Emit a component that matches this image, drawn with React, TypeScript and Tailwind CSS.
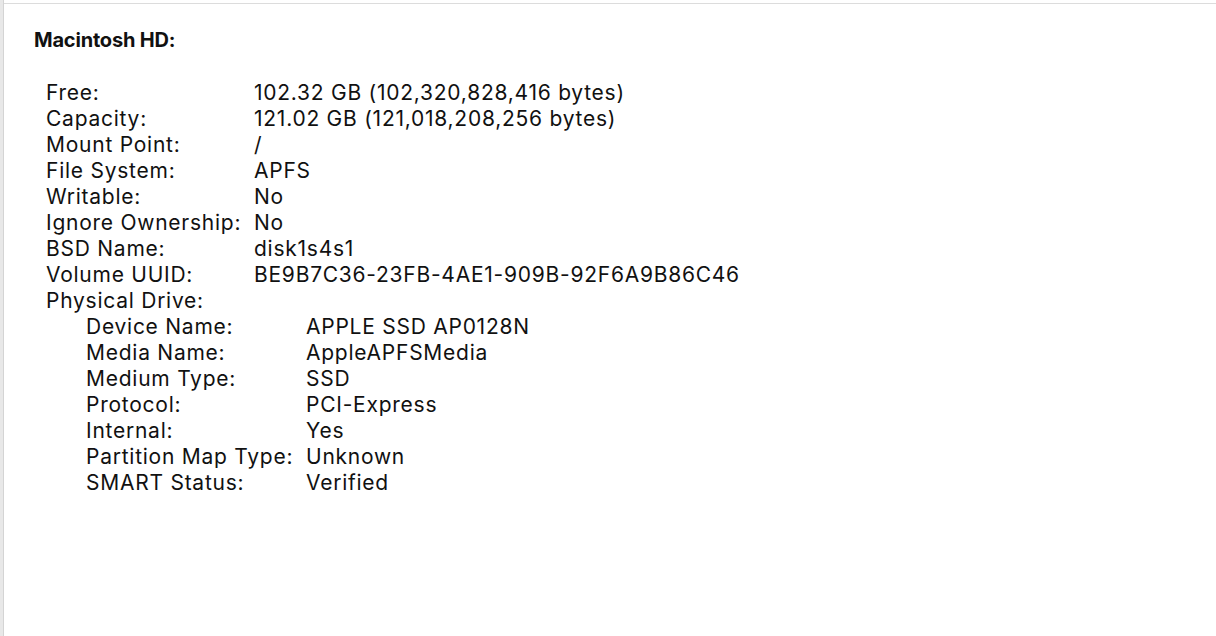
import React from 'react';

const volumeRows: [string, string][] = [
  ['Free:', '102.32 GB (102,320,828,416 bytes)'],
  ['Capacity:', '121.02 GB (121,018,208,256 bytes)'],
  ['Mount Point:', '/'],
  ['File System:', 'APFS'],
  ['Writable:', 'No'],
  ['Ignore Ownership:', 'No'],
  ['BSD Name:', 'disk1s4s1'],
  ['Volume UUID:', 'BE9B7C36-23FB-4AE1-909B-92F6A9B86C46'],
];

const driveRows: [string, string][] = [
  ['Device Name:', 'APPLE SSD AP0128N'],
  ['Media Name:', 'AppleAPFSMedia'],
  ['Medium Type:', 'SSD'],
  ['Protocol:', 'PCI-Express'],
  ['Internal:', 'Yes'],
  ['Partition Map Type:', 'Unknown'],
  ['SMART Status:', 'Verified'],
];

export default function App() {
  return (
    <div className="flex h-[636px] w-[1216px] overflow-hidden bg-white font-['Inter',sans-serif] text-[#111]">
      {/* left sidebar edge */}
      <div className="w-[4px] shrink-0 border-r border-[#d4d4d4] bg-[#e8e8e8]" />
      <div className="flex min-w-0 flex-1 flex-col pt-[3px]">
        <div className="h-[1px] bg-[#dcdcdc]" />
        <div className="pl-[30px] pt-[23px]">
          <h1 className="text-[20px] font-bold leading-[26px] tracking-[-0.2px]">Macintosh HD:</h1>
          <div className="mt-[27px] pl-[12px] text-[21px] leading-[26px] tracking-[0.75px]">
            <div className="grid grid-cols-[208px_1fr]">
              {volumeRows.map(([k, v]) => (
                <React.Fragment key={k}>
                  <div>{k}</div>
                  <div>{v}</div>
                </React.Fragment>
              ))}
            </div>
            <div>Physical Drive:</div>
            <div className="grid grid-cols-[220px_1fr] pl-[40px]">
              {driveRows.map(([k, v]) => (
                <React.Fragment key={k}>
                  <div>{k}</div>
                  <div>{v}</div>
                </React.Fragment>
              ))}
            </div>
          </div>
        </div>
      </div>
    </div>
  );
}
